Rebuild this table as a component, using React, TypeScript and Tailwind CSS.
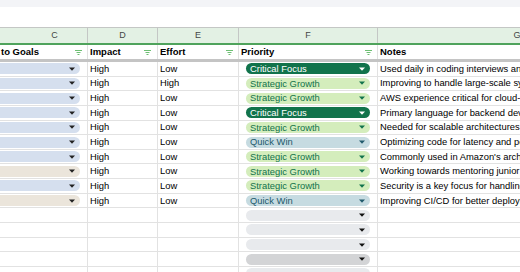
import React from "react";

type Pri = "crit" | "strat" | "quick" | "empty" | "emptyDark";

const rows: { c: "blue" | "beige"; impact: string; effort: string; pri: Pri; note: string }[] = [
  { c: "blue", impact: "High", effort: "Low", pri: "crit", note: "Used daily in coding interviews and projects" },
  { c: "blue", impact: "High", effort: "High", pri: "strat", note: "Improving to handle large-scale systems" },
  { c: "blue", impact: "High", effort: "Low", pri: "strat", note: "AWS experience critical for cloud-based roles" },
  { c: "blue", impact: "High", effort: "Low", pri: "crit", note: "Primary language for backend development" },
  { c: "blue", impact: "High", effort: "Low", pri: "strat", note: "Needed for scalable architectures at scale" },
  { c: "blue", impact: "High", effort: "Low", pri: "quick", note: "Optimizing code for latency and performance" },
  { c: "blue", impact: "High", effort: "Low", pri: "strat", note: "Commonly used in Amazon's architecture" },
  { c: "beige", impact: "High", effort: "Low", pri: "strat", note: "Working towards mentoring junior engineers" },
  { c: "blue", impact: "High", effort: "Low", pri: "strat", note: "Security is a key focus for handling data" },
  { c: "beige", impact: "High", effort: "Low", pri: "quick", note: "Improving CI/CD for better deployments" },
];

const emptyRows: Pri[] = ["empty", "empty", "empty", "emptyDark", "empty"];

function Arrow({ color }: { color: string }) {
  return (
    <svg width="6" height="4" viewBox="0 0 6 4" className="shrink-0">
      <path d="M0 0.5 L6 0.5 L3 3.8 Z" fill={color} />
    </svg>
  );
}

function Filter() {
  return (
    <svg width="7" height="5" viewBox="0 0 7 5" className="shrink-0">
      <rect x="0" y="0" width="7" height="1" fill="#6dbf73" />
      <rect x="1.5" y="2" width="4" height="1" fill="#6dbf73" />
      <rect x="2.5" y="4" width="2" height="1" fill="#6dbf73" />
    </svg>
  );
}

function PriPill({ p }: { p: Pri }) {
  if (p === "crit")
    return (
      <div className="ml-[7px] mr-[7px] flex h-[11px] flex-1 items-center justify-between rounded-full bg-[#11734b] pl-[4px] pr-[5px] text-white">
        <span className="leading-none">Critical Focus</span>
        <Arrow color="#ffffff" />
      </div>
    );
  if (p === "strat")
    return (
      <div className="ml-[7px] mr-[7px] flex h-[11px] flex-1 items-center justify-between rounded-full bg-[#d4edbc] pl-[4px] pr-[5px] text-[#11734b]">
        <span className="leading-none">Strategic Growth</span>
        <Arrow color="#11734b" />
      </div>
    );
  if (p === "quick")
    return (
      <div className="ml-[7px] mr-[7px] flex h-[11px] flex-1 items-center justify-between rounded-full bg-[#c6dbe1] pl-[4px] pr-[5px] text-[#215a6c]">
        <span className="leading-none">Quick Win</span>
        <Arrow color="#215a6c" />
      </div>
    );
  if (p === "emptyDark")
    return (
      <div className="ml-[7px] mr-[7px] flex h-[11px] flex-1 items-center justify-end rounded-full bg-[#d3d4d6] pr-[5px]">
        <Arrow color="#111111" />
      </div>
    );
  return (
    <div className="ml-[7px] mr-[7px] flex h-[11px] flex-1 items-center justify-end rounded-full bg-[#e8eaed] pr-[5px]">
      <Arrow color="#111111" />
    </div>
  );
}

export default function App() {
  return (
    <div className="relative h-[272px] w-[520px] overflow-hidden bg-white font-['Liberation_Sans',Arial,sans-serif] text-[9.4px] text-black">
      <div className="h-[7px] bg-[#f3f4f7]" />
      <div className="h-[20px] bg-white" />
      <div className="w-[700px]">
        {/* column letters */}
        <div className="flex h-[18px] border-t border-b-2 border-t-[#c4c7c5] border-b-[#4fa35c] bg-[#e3f1e4] text-[9px] text-[#444746]">
          <div className="flex w-[88px] items-center justify-center border-r border-[#c4c7c5] pl-[22px]">C</div>
          <div className="flex w-[70px] items-center justify-center border-r border-[#c4c7c5]">D</div>
          <div className="flex w-[81px] items-center justify-center border-r border-[#c4c7c5]">E</div>
          <div className="flex w-[139px] items-center justify-center border-r border-[#c4c7c5]">F</div>
          <div className="flex w-[278px] items-center justify-center">G</div>
        </div>
        {/* field header */}
        <div className="flex h-[14px] text-[9.5px] font-bold">
          <div className="flex w-[88px] items-center justify-between border-r border-[#e1e1e1] pl-[1px] pr-[5px]">
            <span>to Goals</span>
            <Filter />
          </div>
          <div className="flex w-[70px] items-center justify-between border-r border-[#e1e1e1] pl-[2px] pr-[6px]">
            <span>Impact</span>
            <Filter />
          </div>
          <div className="flex w-[81px] items-center justify-between border-r border-[#e1e1e1] pl-[2px] pr-[5px]">
            <span>Effort</span>
            <Filter />
          </div>
          <div className="flex w-[139px] items-center justify-between border-r border-[#e1e1e1] pl-[2px] pr-[5px]">
            <span>Priority</span>
            <Filter />
          </div>
          <div className="flex w-[278px] items-center pl-[2px]">
            <span>Notes</span>
          </div>
        </div>
        <div className="h-[3px] bg-[#c4c4c4]" />
        {/* data rows */}
        {rows.map((r, i) => (
          <div key={i} className="flex h-[14.65px] border-b border-[#e2e2e2]">
            <div className="flex w-[88px] items-center border-r border-[#e2e2e2]">
              <div
                className={
                  "ml-[-10px] mr-[7px] flex h-[11px] flex-1 items-center justify-end rounded-full pr-[5px] " +
                  (r.c === "blue" ? "bg-[#d5dfee]" : "bg-[#ebe5db]")
                }
              >
                <Arrow color="#222222" />
              </div>
            </div>
            <div className="flex w-[70px] items-center border-r border-[#e2e2e2] pl-[2px]">{r.impact}</div>
            <div className="flex w-[81px] items-center border-r border-[#e2e2e2] pl-[2px]">{r.effort}</div>
            <div className="flex w-[139px] items-center border-r border-[#e2e2e2]">
              <PriPill p={r.pri} />
            </div>
            <div className="flex w-[278px] items-center overflow-hidden whitespace-nowrap pl-[2px]">{r.note}</div>
          </div>
        ))}
        {emptyRows.map((p, i) => (
          <div key={"e" + i} className="flex h-[14.65px] border-b border-[#e2e2e2]">
            <div className="w-[88px] border-r border-[#e2e2e2]" />
            <div className="w-[70px] border-r border-[#e2e2e2]" />
            <div className="w-[81px] border-r border-[#e2e2e2]" />
            <div className="flex w-[139px] items-center border-r border-[#e2e2e2]">
              <PriPill p={p} />
            </div>
            <div className="w-[278px]" />
          </div>
        ))}
      </div>
    </div>
  );
}
